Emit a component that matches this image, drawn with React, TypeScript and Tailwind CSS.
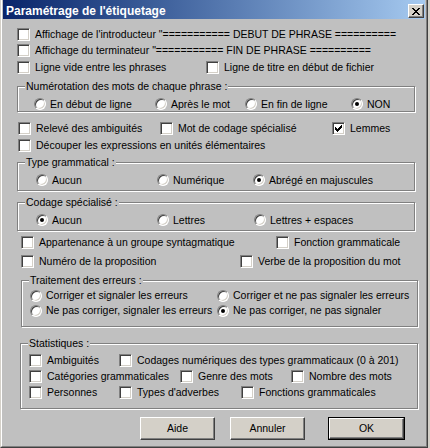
import React from "react";

function Check({ checked }: { checked?: boolean }) {
  return (
    <span className="relative block w-[13px] h-[13px] shrink-0 border border-t-[#808080] border-l-[#808080] border-r-white border-b-white bg-white shadow-[inset_1px_1px_0_#404040,inset_-1px_-1px_0_#d4d0c8]">
      {checked && (
        <svg className="absolute left-[2px] top-[2px]" width="7" height="7" viewBox="0 0 7 7" shapeRendering="crispEdges">
          <rect x="0" y="2" width="1" height="3" fill="#000" />
          <rect x="1" y="3" width="1" height="3" fill="#000" />
          <rect x="2" y="4" width="1" height="3" fill="#000" />
          <rect x="3" y="3" width="1" height="3" fill="#000" />
          <rect x="4" y="2" width="1" height="3" fill="#000" />
          <rect x="5" y="1" width="1" height="3" fill="#000" />
          <rect x="6" y="0" width="1" height="3" fill="#000" />
        </svg>
      )}
    </span>
  );
}

function Radio({ checked }: { checked?: boolean }) {
  return (
    <span className="flex items-center justify-center w-[12px] h-[12px] shrink-0 rounded-full border border-t-[#808080] border-l-[#808080] border-r-white border-b-white bg-white shadow-[inset_1px_1px_0_#404040,inset_-1px_-1px_0_#d4d0c8]">
      {checked && <span className="block w-[4px] h-[4px] rounded-full bg-black" />}
    </span>
  );
}

function CB({ label, checked, w = "" }: { label: string; checked?: boolean; w?: string }) {
  return (
    <div className={"flex items-center gap-[5px] shrink-0 " + w}>
      <Check checked={checked} />
      <span className="whitespace-nowrap">{label}</span>
    </div>
  );
}

function RB({ label, checked, w = "" }: { label: string; checked?: boolean; w?: string }) {
  return (
    <div className={"flex items-center gap-[4px] shrink-0 " + w}>
      <Radio checked={checked} />
      <span className="whitespace-nowrap">{label}</span>
    </div>
  );
}

function Group({ label, className, children }: { label: string; className: string; children: React.ReactNode }) {
  return (
    <div className={"relative shrink-0 border border-[#808080] shadow-[inset_1px_1px_0_#fff,1px_1px_0_#fff] " + className}>
      <span className="absolute left-[7px] -top-[7px] px-[1px] bg-[#c0c0c0] leading-[13px] whitespace-nowrap">{label}</span>
      {children}
    </div>
  );
}

function Btn({ label, def }: { label: string; def?: boolean }) {
  const face = (
    <div className="w-full h-full flex items-center justify-center bg-[#d4d0c8] border border-t-white border-l-white border-r-[#404040] border-b-[#404040] shadow-[inset_-1px_-1px_0_#808080]">
      {label}
    </div>
  );
  if (def) return <div className="w-[77px] h-[23px] border border-black">{face}</div>;
  return <div className="w-[75px] h-[23px]">{face}</div>;
}

export default function App() {
  return (
    <div className="w-[430px] h-[448px] bg-[#d4d0c8] font-[Liberation_Sans,Arial,sans-serif] text-[10.5px] leading-[13px] text-black overflow-hidden">
      <div className="w-[428px] h-[448px] flex flex-col bg-[#c0c0c0] border-l border-l-[#d4d0c8] border-r border-r-[#404040] border-b border-b-[#404040]">
        <div className="flex-1 flex flex-col border-l border-l-white border-r border-r-[#808080] border-b border-b-[#808080] px-[1px]">
          {/* title bar */}
          <div className="h-[19px] shrink-0 flex items-start justify-between bg-linear-to-r from-[#0a246a] to-[#a6caf0] pl-[3px] pr-[1px]">
            <span className="mt-[4px] text-white font-bold text-[12px] leading-[14px] whitespace-nowrap">Paramétrage de l'étiquetage</span>
            <div className="mt-[4px] w-[16px] h-[14px] flex items-center justify-center bg-[#d4d0c8] border border-t-white border-l-white border-r-[#404040] border-b-[#404040] shadow-[inset_-1px_-1px_0_#808080]">
              <svg width="8" height="7" viewBox="0 0 8 7" shapeRendering="crispEdges">
                <path d="M0.5 0 L7.5 7 M7.5 0 L0.5 7" stroke="#000" strokeWidth="1.8" />
              </svg>
            </div>
          </div>

          <div className="mt-[7px] ml-[14px] h-[16px] flex items-center">
            <CB label={"Affichage de l'introducteur \"=========== DEBUT DE PHRASE =========="} />
          </div>
          <div className="ml-[14px] h-[16px] flex items-center">
            <CB label={"Affichage du terminateur \"=========== FIN DE PHRASE =========="} />
          </div>
          <div className="mt-[1px] ml-[14px] h-[16px] flex items-center">
            <CB label="Ligne vide entre les phrases" w="w-[189px]" />
            <CB label="Ligne de titre en début de fichier" />
          </div>

          <Group label="Numérotation des mots de chaque phrase :" className="mt-[11px] ml-[14px] w-[398px] h-[26px]">
            <div className="mt-[10px] ml-[16px] h-[14px] flex items-center">
              <RB label="En début de ligne" w="w-[121px]" />
              <RB label="Après le mot" w="w-[90px]" />
              <RB label="En fin de ligne" w="w-[106px]" />
              <RB label="NON" checked />
            </div>
          </Group>

          <div className="mt-[8px] ml-[15px] h-[16px] flex items-center">
            <CB label="Relevé des ambiguités" w="w-[142px]" />
            <CB label="Mot de codage spécialisé" w="w-[172px]" />
            <CB label="Lemmes" checked />
          </div>
          <div className="mt-[1px] ml-[15px] h-[16px] flex items-center">
            <CB label="Découper les expressions en unités élémentaires" />
          </div>

          <Group label="Type grammatical :" className="mt-[9px] ml-[14px] w-[398px] h-[29px]">
            <div className="mt-[10px] ml-[18px] h-[14px] flex items-center">
              <RB label="Aucun" w="w-[121px]" />
              <RB label="Numérique" w="w-[96px]" />
              <RB label="Abrégé en majuscules" checked />
            </div>
          </Group>

          <Group label="Codage spécialisé :" className="mt-[11px] ml-[14px] w-[398px] h-[29px]">
            <div className="mt-[10px] ml-[18px] h-[14px] flex items-center">
              <RB label="Aucun" checked w="w-[121px]" />
              <RB label="Lettres" w="w-[97px]" />
              <RB label="Lettres + espaces" />
            </div>
          </Group>

          <div className="mt-[3px] ml-[18px] h-[16px] flex items-center">
            <CB label="Appartenance à un groupe syntagmatique" w="w-[255px]" />
            <CB label="Fonction grammaticale" />
          </div>
          <div className="mt-[3px] ml-[18px] h-[16px] flex items-center">
            <CB label="Numéro de la proposition" w="w-[219px]" />
            <CB label="Verbe de la proposition du mot" />
          </div>

          <Group label="Traitement des erreurs :" className="mt-[11px] ml-[18px] w-[397px] h-[47px]">
            <div className="mt-[7px] ml-[8px] flex flex-col">
              <div className="h-[15px] flex items-center">
                <RB label="Corriger et signaler les erreurs" w="w-[187px]" />
                <RB label="Corriger et ne pas signaler les erreurs" />
              </div>
              <div className="h-[15px] flex items-center">
                <RB label="Ne pas corriger, signaler les erreurs" w="w-[187px]" />
                <RB label="Ne pas corriger, ne pas signaler" checked />
              </div>
            </div>
          </Group>

          <Group label="Statistiques :" className="mt-[16px] ml-[17px] w-[398px] h-[66px]">
            <div className="mt-[8px] ml-[8px] flex flex-col">
              <div className="h-[16px] flex items-center">
                <CB label="Ambiguités" w="w-[90px]" />
                <CB label="Codages numériques des types grammaticaux (0 à 201)" />
              </div>
              <div className="h-[16px] flex items-center">
                <CB label="Catégories grammaticales" w="w-[151px]" />
                <CB label="Genre des mots" w="w-[111px]" />
                <CB label="Nombre des mots" />
              </div>
              <div className="h-[16px] flex items-center">
                <CB label="Personnes" w="w-[90px]" />
                <CB label="Types d'adverbes" w="w-[122px]" />
                <CB label="Fonctions grammaticales" />
              </div>
            </div>
          </Group>

          <div className="mt-[8px] ml-[137px] flex items-start">
            <Btn label="Aide" />
            <div className="ml-[15px]">
              <Btn label="Annuler" />
            </div>
            <div className="ml-[23px]">
              <Btn label="OK" def />
            </div>
          </div>
        </div>
      </div>
    </div>
  );
}
